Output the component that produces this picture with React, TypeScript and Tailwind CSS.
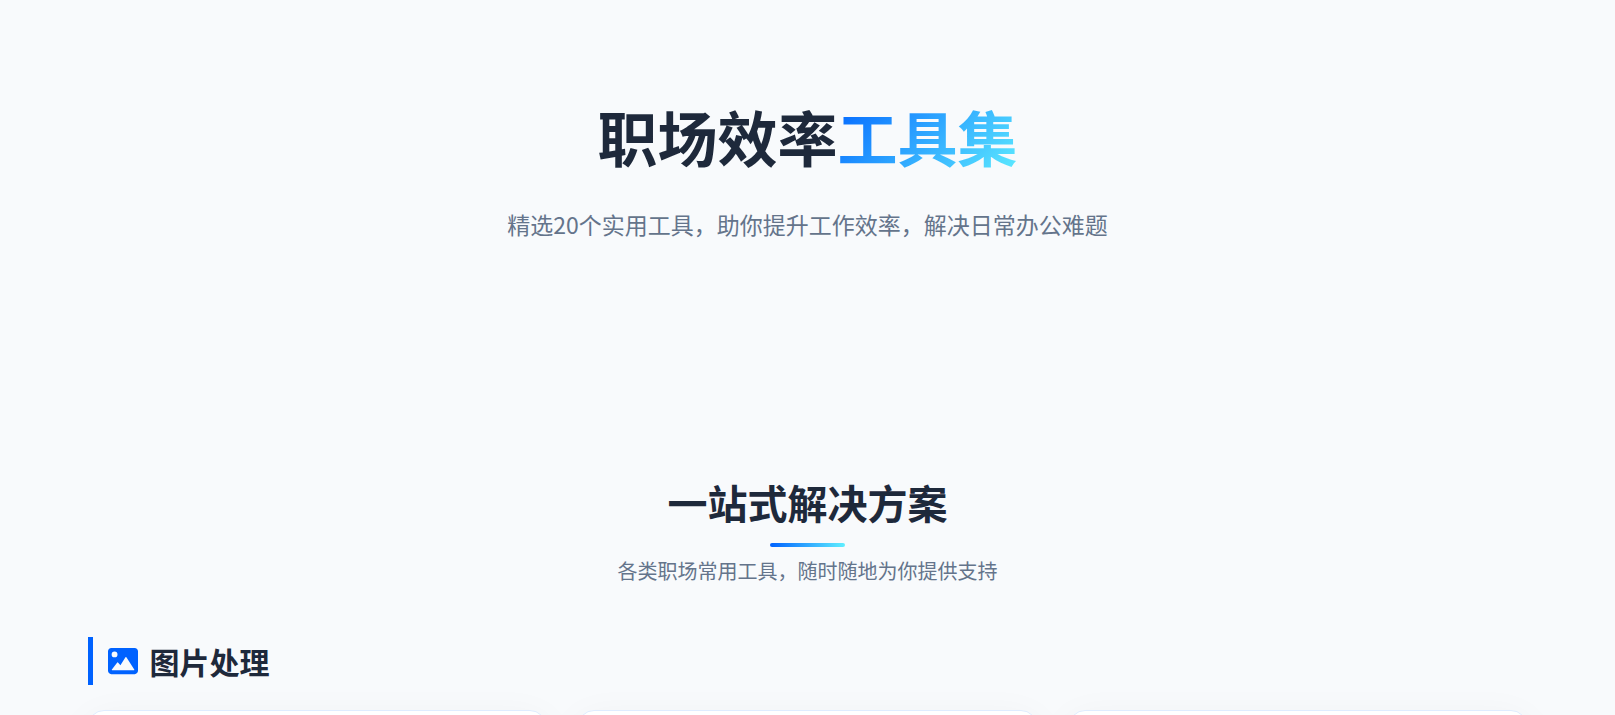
const cards = ["first", "second", "third"];

function ImageIcon() {
    return (
        <svg className="size-[30px] text-[#0062ff]" viewBox="0 0 512 512" fill="currentColor" aria-hidden="true">
            <path
                fillRule="evenodd"
                d="M56 32H456C487 32 512 57 512 88V424C512 455 487 480 456 480H56C25 480 0 455 0 424V88C0 57 25 32 56 32ZM112 94A50 50 0 1 0 112 194A50 50 0 1 0 112 94ZM72 414H444Q454 414 448 403L314 192Q306 182 298 192L212 330L170 280Q164 274 158 280L66 402Q60 414 72 414Z"
            />
        </svg>
    )
}

function Hero() {
    return (
        <section className="px-4 pt-24 pb-32 text-center">
            <h1 className="mb-7 text-[60px] leading-[80px] font-bold text-[#1e293b]">
                职场效率
                <span className="bg-linear-135/srgb from-[#0062ff] to-[#60efff] bg-clip-text text-transparent">工具集</span>
            </h1>
            <p className="text-[23px] leading-10 text-[#64748b]">
                精选20个实用工具，助你提升工作效率，解决日常办公难题
            </p>
        </section>
    )
}

function SectionHeader() {
    return (
        <div className="mb-[50px] text-center">
            <h2 className="text-[40px] leading-[60px] font-bold text-[#1e293b]">一站式解决方案</h2>
            <div className="mx-auto mt-[11px] mb-2 h-1 w-[75px] rounded-xs bg-linear-to-r/srgb from-[#0062ff] to-[#60efff]" />
            <p className="text-xl leading-8 text-[#64748b]">各类职场常用工具，随时随地为你提供支持</p>
        </div>
    )
}

function App() {
    return (
        <div className="h-screen overflow-hidden bg-[#f8fafc] font-['Noto_Sans_CJK_SC',sans-serif]">
            <Hero />
            <main className="mx-auto max-w-[1440px] pt-[100px]">
                <SectionHeader />
                <h3 className="mb-[25px] flex items-center gap-3 border-l-5 border-[#0062ff] pl-[15px] text-3xl leading-[48px] font-bold text-[#1e293b]">
                    <ImageIcon />
                    图片处理
                </h3>
                <div className="grid grid-cols-3 gap-8">
                    {cards.map((card) => (
                        <div key={card} className="h-60 rounded-2xl border border-[#dfecff] bg-white shadow-[0_10px_40px_rgba(0,0,0,0.05)]" />
                    ))}
                </div>
            </main>
        </div>
    )
}

export default App;
